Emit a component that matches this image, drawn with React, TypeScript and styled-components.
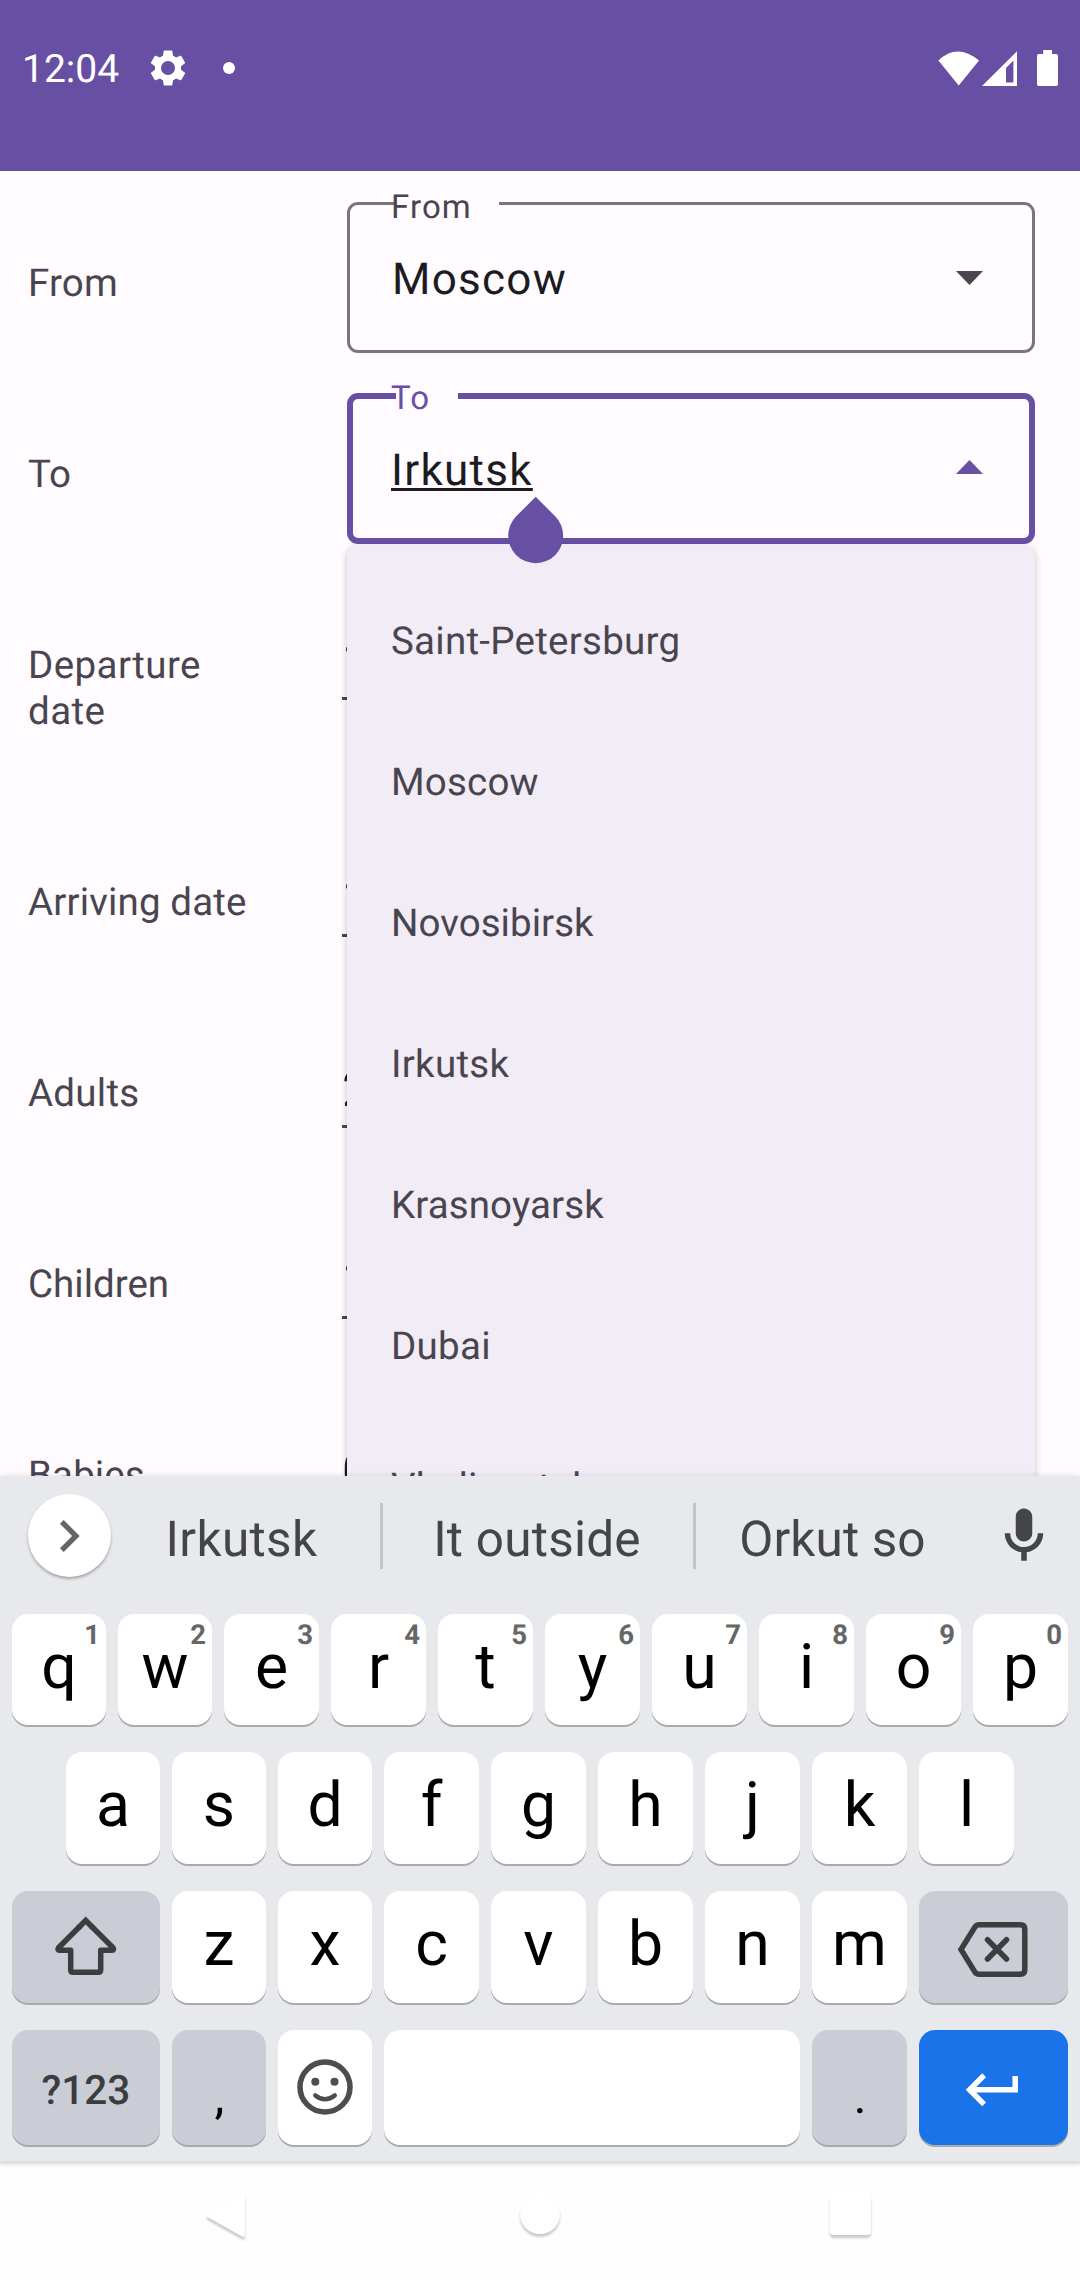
import React from "react";
import styled, { createGlobalStyle, css } from "styled-components";

const color = {
  primary: "#6750a4",
  surface: "#fffbfe",
  menu: "#f2ecf7",
  text: "#1c1b1f",
  muted: "#49454f",
  outline: "#79747e",
  keyboard: "#e8e9ed",
  funcKey: "#cbcdd6",
};

const GlobalStyle = createGlobalStyle`
  * { box-sizing: border-box; }
  body {
    margin: 0;
    background: #fefefe;
    font-family: Roboto, "Noto Sans", sans-serif;
    text-rendering: geometricPrecision;
  }
`;

const Screen = styled.div`
  width: 1080px;
  height: 2280px;
  display: flex;
  flex-direction: column;
  overflow: hidden;
  background: #fefefe;
`;

/* ---------- status bar ---------- */

const TopBar = styled.header`
  height: 171px;
  flex: none;
  padding: 45px 21px 0 22px;
  display: flex;
  align-items: flex-start;
  justify-content: space-between;
  background: ${color.primary};
  color: #fff;
`;

const StatusGroup = styled.div`
  display: flex;
  align-items: center;
  height: 45px;
`;

const Clock = styled.span`
  font-size: 39px;
  line-height: 45px;
  margin: 4px 29px 0 0;
  width: 96px;
  white-space: nowrap;
`;

const Dot = styled.span`
  width: 12px;
  height: 12px;
  border-radius: 50%;
  background: #fff;
  margin-left: 34px;
`;

/* ---------- form ---------- */

const Body = styled.main`
  position: relative;
  height: 1305px;
  flex: none;
  padding-top: 14px;
  overflow: hidden;
  background: ${color.surface};
`;

const FormRow = styled.div<{ $tall?: boolean }>`
  display: flex;
  align-items: flex-start;
  height: ${(p) => (p.$tall ? 237 : 191)}px;
  padding-left: 28px;
`;

const RowLabelCell = styled.div`
  width: 314px;
  flex: none;
  padding: 76px 60px 0 0;
`;

const RowLabel = styled.div<{ $tracking?: number }>`
  max-width: 240px;
  font-size: 38.5px;
  line-height: 46px;
  letter-spacing: ${(p) => p.$tracking ?? 0}px;
  color: ${color.muted};
`;

const PlainInput = styled.div`
  width: 690px;
  height: 68px;
  margin-top: 65px;
  font-size: 49.5px;
  line-height: 60px;
  color: ${color.text};
  border-bottom: 3px solid ${color.muted};
`;

const SelectField = styled.div<{ $active?: boolean }>`
  position: relative;
  width: 688px;
  height: 151px;
  margin: 17px 0 0 5px;
  border: ${(p) => (p.$active ? `6px solid ${color.primary}` : `3px solid ${color.outline}`)};
  border-radius: 11px;
  padding: ${(p) => (p.$active ? "2px 46px 0 38px" : "2px 49px 0 42px")};
  display: flex;
  align-items: center;
  justify-content: space-between;
`;

const FloatLabel = styled.span<{ $active?: boolean }>`
  position: absolute;
  top: ${(p) => (p.$active ? -19 : -16)}px;
  left: ${(p) => (p.$active ? 38 : 41)}px;
  font-size: 33px;
  line-height: 38px;
  letter-spacing: 1.1px;
  color: ${(p) => (p.$active ? color.primary : color.muted)};
`;

const OutlineGap = styled.span<{ $active?: boolean; $width: number }>`
  position: absolute;
  top: ${(p) => (p.$active ? -6 : -3)}px;
  left: ${(p) => (p.$active ? 43 : 44)}px;
  width: ${(p) => p.$width}px;
  height: 6px;
  background: ${color.surface};
`;

const FieldValue = styled.span<{ $composing?: boolean }>`
  font-size: 44px;
  line-height: 52px;
  letter-spacing: 1.28px;
  color: ${color.text};
  ${(p) =>
    p.$composing &&
    css`
      text-decoration: underline;
      text-decoration-thickness: 3px;
      text-underline-offset: 3px;
      text-decoration-skip-ink: none;
    `}
`;

const Caret = styled.svg<{ $raise?: boolean }>`
  margin-bottom: ${(p) => (p.$raise ? 5 : 1)}px;
`;

const Menu = styled.ul`
  position: absolute;
  top: 374px;
  left: 347px;
  width: 688px;
  height: 1100px;
  margin: 0;
  padding: 26px 0 0;
  list-style: none;
  background: ${color.menu};
  border-radius: 11px;
  box-shadow: 0 2px 7px rgba(0, 0, 0, 0.24);
`;

const MenuItem = styled.li<{ $tracking: number }>`
  height: 141px;
  padding-left: 44px;
  display: flex;
  align-items: center;
  font-size: 38.5px;
  line-height: 46px;
  letter-spacing: ${(p) => p.$tracking}px;
  color: ${color.muted};
`;

const Handle = styled.svg`
  position: absolute;
  left: 508px;
  top: 325px;
`;

/* ---------- keyboard ---------- */

const Keyboard = styled.section`
  position: relative;
  height: 688px;
  flex: none;
  background: ${color.keyboard};
  border-bottom: 3px solid #e0e0e2;
  box-shadow: 0 0 6px rgba(0, 0, 0, 0.12);
`;

const Suggestions = styled.div`
  height: 138px;
  padding: 18px 23px 0 28px;
  display: flex;
  align-items: flex-start;
`;

const Expand = styled.div`
  width: 83px;
  height: 83px;
  flex: none;
  border-radius: 50%;
  background: #fff;
  box-shadow: 0 2px 3px rgba(0, 0, 0, 0.3);
  display: flex;
  align-items: center;
  justify-content: center;

  svg {
    margin-right: 2px;
  }
`;

const Suggestion = styled.div<{ $width: number; $trail?: number; $tracking?: number }>`
  width: ${(p) => p.$width}px;
  flex: none;
  padding: 17px ${(p) => p.$trail ?? 0}px 0 0;
  text-align: center;
  white-space: nowrap;
  font-size: 49.5px;
  line-height: 58px;
  letter-spacing: ${(p) => p.$tracking ?? 0}px;
  color: #444547;
`;

const Divider = styled.div`
  width: 3px;
  height: 66px;
  margin-top: 9px;
  flex: none;
  background: #c4c5c9;
`;

const MicSlot = styled.div`
  margin: 9px 0 0 22px;
  width: 66px;
  height: 66px;
`;

const KeyRow = styled.div<{ $height: number; $inset?: number; $gap?: number }>`
  display: flex;
  gap: 12px;
  height: ${(p) => p.$height}px;
  margin-bottom: ${(p) => p.$gap ?? 27}px;
  padding: 0 ${(p) => p.$inset ?? 12}px;
`;

type KeyTone = "plain" | "func" | "action";

const toneColor: Record<KeyTone, string> = {
  plain: "#fff",
  func: color.funcKey,
  action: "#1a73e8",
};

const Key = styled.div<{ $tone?: KeyTone; $basis?: number }>`
  position: relative;
  flex: ${(p) => (p.$basis ? `0 0 ${p.$basis}px` : "1 1 0")};
  min-width: 0;
  border-radius: 16px;
  background: ${(p) => toneColor[p.$tone ?? "plain"]};
  box-shadow: 0 2px 0 #a9aaad;
  display: flex;
  justify-content: center;
  align-items: flex-start;
`;

const KeyLetter = styled.span`
  padding-top: 16.5px;
  font-size: 62.5px;
  line-height: 73px;
  color: #000;
`;

const KeyMark = styled.span`
  padding: 38px 0 0 1px;
  font-size: 50px;
  line-height: 58px;
  color: #000;
`;

const KeyCaption = styled.span`
  padding-top: 36px;
  font-size: 40.5px;
  font-weight: 500;
  line-height: 48px;
  color: #3c3d3f;
`;

const KeyHint = styled.span`
  position: absolute;
  top: 5px;
  right: 6px;
  font-size: 27.5px;
  font-weight: 700;
  line-height: 32px;
  color: #666;
`;

const KeyIcon = styled.svg`
  display: block;
  width: 100%;
  height: 100%;
  overflow: visible;
`;

/* ---------- navigation bar ---------- */

const NavBar = styled.nav`
  flex: 1;
  display: flex;
  justify-content: space-between;
  padding: 27px 206px 0 204px;

  svg {
    overflow: visible;
    filter: drop-shadow(0 3px 1.2px rgba(0, 0, 0, 0.2));
  }
`;

const HomeButton = styled.svg`
  margin-left: 5px;
`;

const cities = [
  { name: "Saint-Petersburg", tracking: 0.26 },
  { name: "Moscow", tracking: 0.2 },
  { name: "Novosibirsk", tracking: 0.05 },
  { name: "Irkutsk", tracking: 0.3 },
  { name: "Krasnoyarsk", tracking: 0.12 },
  { name: "Dubai", tracking: 0.3 },
  { name: "Vladivostok", tracking: 0.1 },
];

const inputs = [
  { label: "Departure date", value: "1", tracking: 0.42, tall: true },
  { label: "Arriving date", value: "1", tracking: 0.15 },
  { label: "Adults", value: "2", tracking: 0.25 },
  { label: "Children", value: "1", tracking: 0 },
  { label: "Babies", value: "0", tracking: 0.1 },
];

const StatusIcons = () => (
  <svg width="121" height="38" viewBox="938 48 121 38" fill="#fff">
    <path d="M938.400 59.500Q957 41.500 979 59.500L958.700 84.500Z" />
    <path fillRule="evenodd" d="M1017 50.300V85H982ZM1013.400 59.500L1006 67V81.500H1013.400Z" />
    <path d="M1043.200 49H1052V53H1056.200Q1058 53 1058 54.800V83.200Q1058 85 1056.200 85H1038.800Q1037 85 1037 83.200V54.800Q1037 53 1038.800 53H1043.200Z" />
  </svg>
);

const GearIcon = () => (
  <svg width="42" height="42" viewBox="0 0 24 24" fill="#fff">
    <path
      fillRule="evenodd"
      d="M19.430 12.980c.04-.32.07-.64.07-.98s-.03-.66-.07-.98l2.110-1.650c.19-.15.24-.42.12-.64l-2-3.460c-.12-.22-.39-.3-.61-.22l-2.490 1c-.52-.4-1.080-.73-1.690-.98l-.38-2.650C14.460 2.180 14.250 2 14 2h-4c-.25 0-.46.18-.49.42l-.38 2.650c-.61.25-1.170.59-1.690.98l-2.490-1c-.23-.09-.49 0-.61.22l-2 3.460c-.13.22-.07.49.12.64l2.110 1.650c-.04.32-.07.65-.07.98s.03.66.07.98l-2.110 1.650c-.19.15-.24.42-.12.64l2 3.460c.12.22.39.3.61.22l2.490-1c.52.4 1.080.73 1.690.98l.38 2.650c.03.24.24.42.49.42h4c.25 0 .46-.18.49-.42l.38-2.650c.61-.25 1.170-.59 1.690-.98l2.490 1c.23.09.49 0 .61-.22l2-3.460c.12-.22.07-.49-.12-.64l-2.110-1.650zM12 16a4 4 0 1 1 0-8 4 4 0 0 1 0 8z"
    />
  </svg>
);

interface LetterKeysProps {
  letters: string;
  hints?: string;
  /** How many leading keys are one pixel narrower than the rest. */
  narrow: number;
}

const LetterKeys = ({ letters, hints, narrow }: LetterKeysProps) => (
  <>
    {letters.split("").map((letter, i) => (
      <Key key={letter} $basis={i < narrow ? 94 : 95}>
        <KeyLetter>{letter}</KeyLetter>
        {hints && <KeyHint>{hints[i]}</KeyHint>}
      </Key>
    ))}
  </>
);

export default function App() {
  return (
    <Screen>
      <GlobalStyle />
      <TopBar>
        <StatusGroup>
          <Clock>12:04</Clock>
          <GearIcon />
          <Dot />
        </StatusGroup>
        <StatusGroup>
          <StatusIcons />
        </StatusGroup>
      </TopBar>

      <Body>
        <FormRow>
          <RowLabelCell>
            <RowLabel $tracking={0.2}>From</RowLabel>
          </RowLabelCell>
          <SelectField>
            <OutlineGap $width={105} />
            <FloatLabel>From</FloatLabel>
            <FieldValue>Moscow</FieldValue>
            <Caret width="27" height="14" viewBox="0 0 27 14" fill={color.muted}>
              <path d="M0 0H27L13.500 14Z" />
            </Caret>
          </SelectField>
        </FormRow>
        <FormRow>
          <RowLabelCell>
            <RowLabel>To</RowLabel>
          </RowLabelCell>
          <SelectField $active>
            <OutlineGap $active $width={62} />
            <FloatLabel $active>To</FloatLabel>
            <FieldValue $composing>Irkutsk</FieldValue>
            <Caret $raise width="27" height="14" viewBox="0 0 27 14" fill={color.primary}>
              <path d="M0 14H27L13.500 0Z" />
            </Caret>
          </SelectField>
        </FormRow>
        {inputs.map((row) => (
          <FormRow key={row.label} $tall={row.tall}>
            <RowLabelCell>
              <RowLabel $tracking={row.tracking}>{row.label}</RowLabel>
            </RowLabelCell>
            <PlainInput>{row.value}</PlainInput>
          </FormRow>
        ))}
        <Menu>
          {cities.map((city) => (
            <MenuItem key={city.name} $tracking={city.tracking}>
              {city.name}
            </MenuItem>
          ))}
        </Menu>
        <Handle width="56" height="68" viewBox="0 0 56 68" fill={color.primary}>
          <path d="M27.700 0.800L47.200 20.300A27.500 27.500 0 1 1 8.200 20.300Z" />
        </Handle>
      </Body>

      <Keyboard>
        <Suggestions>
          <Expand>
            <svg width="64" height="64" viewBox="0 0 24 24" fill="#666">
              <path d="M10 6L8.590 7.410 13.170 12l-4.580 4.590L10 18l6-6z" />
            </svg>
          </Expand>
          <Suggestion $width={269} $trail={8} $tracking={0.35}>
            Irkutsk
          </Suggestion>
          <Divider />
          <Suggestion $width={310} $trail={2} $tracking={0.22}>
            It outside
          </Suggestion>
          <Divider />
          <Suggestion $width={273} $tracking={0.12}>
            Orkut so
          </Suggestion>
          <MicSlot>
            <svg width="66" height="66" viewBox="0 0 24 24" fill="#444547">
              <path d="M12 14c1.660 0 3-1.340 3-3V5c0-1.660-1.340-3-3-3S9 3.340 9 5v6c0 1.660 1.340 3 3 3zm5-3c0 2.760-2.240 5-5 5s-5-2.240-5-5H5c0 3.530 2.610 6.430 6 6.920V21h2v-3.080c3.390-.49 6-3.390 6-6.920h-2z" />
            </svg>
          </MicSlot>
        </Suggestions>

        <KeyRow $height={111}>
          <LetterKeys letters="qwertyuiop" hints="1234567890" narrow={2} />
        </KeyRow>
        <KeyRow $height={112} $inset={66}>
          <LetterKeys letters="asdfghjkl" narrow={3} />
        </KeyRow>
        <KeyRow $height={112}>
          <Key $tone="func" $basis={148}>
            <KeyIcon viewBox="12 1891 148 112" fill="none" stroke="#3c3d3f" strokeWidth="5.5">
              <path
                strokeLinejoin="round"
                d="M80 1926.200L58.500 1947.700Q57.200 1950.300 59.500 1950.300H70.700V1970Q70.700 1972.300 73 1972.300H98.500Q100.700 1972.300 100.700 1970V1950.300H112Q114.300 1950.300 113 1947.700L91.400 1926.200"
              />
              <path strokeLinejoin="miter" d="M78 1928.200L85.700 1920.500L93.400 1928.200" />
            </KeyIcon>
          </Key>
          <LetterKeys letters="zxcvbnm" narrow={2} />
          <Key $tone="func" $basis={149}>
            <KeyIcon
              viewBox="919 1891 149 112"
              fill="none"
              stroke="#3c3d3f"
              strokeWidth="5.5"
              strokeLinejoin="round"
              strokeLinecap="round"
            >
              <path
                strokeLinejoin="miter"
                d="M961 1949.500L974.800 1927.200Q976.300 1924.700 979 1924.700H1020.300Q1024.800 1924.700 1024.800 1929.200V1969.800Q1024.800 1974.300 1020.300 1974.300H979Q976.300 1974.300 974.800 1971.800Z"
              />
              <path d="M987.500 1939.700L1006.500 1959M1006.500 1939.700L987.500 1959" />
            </KeyIcon>
          </Key>
        </KeyRow>
        <KeyRow $height={115} $gap={0}>
          <Key $tone="func" $basis={148}>
            <KeyCaption>?123</KeyCaption>
          </Key>
          <Key $tone="func" $basis={94}>
            <KeyMark>,</KeyMark>
          </Key>
          <Key $basis={94}>
            <KeyIcon viewBox="278 2030 94 115" fill="none" stroke="#4d4d4d" strokeWidth="5.5">
              <circle cx="325" cy="2087" r="25" />
              <circle cx="315.300" cy="2081.700" r="4" fill="#4d4d4d" stroke="none" />
              <circle cx="334.500" cy="2081.700" r="4" fill="#4d4d4d" stroke="none" />
              <path strokeWidth="4.6" strokeLinecap="round" d="M315.400 2095.500Q325 2103 334.700 2095.500" />
            </KeyIcon>
          </Key>
          <Key />
          <Key $tone="func" $basis={95}>
            <KeyMark>.</KeyMark>
          </Key>
          <Key $tone="action" $basis={149}>
            <KeyIcon viewBox="919 2030 149 115" fill="#fff">
              <path
                transform="translate(960.200 2056.800) scale(2.750)"
                d="M19 7v4H5.830l3.580-3.590L8 6l-6 6 6 6 1.410-1.410L5.830 13H21V7z"
              />
            </KeyIcon>
          </Key>
        </KeyRow>
      </Keyboard>

      <NavBar>
        <svg width="42" height="50" viewBox="204 2191 42 50" fill="#fff">
          <path d="M206.500 2214.500L242.500 2194.500Q244.800 2193.500 244.800 2196V2235Q244.800 2237.800 242.300 2236.500L206.500 2216.500Z" />
        </svg>
        <HomeButton width="42" height="50" viewBox="519 2191 42 50" fill="#fff">
          <circle cx="540" cy="2214" r="20" />
        </HomeButton>
        <svg width="45" height="50" viewBox="829 2191 45 50" fill="#fff">
          <rect x="829.700" y="2194" width="41.300" height="41" rx="4" />
        </svg>
      </NavBar>
    </Screen>
  );
}
